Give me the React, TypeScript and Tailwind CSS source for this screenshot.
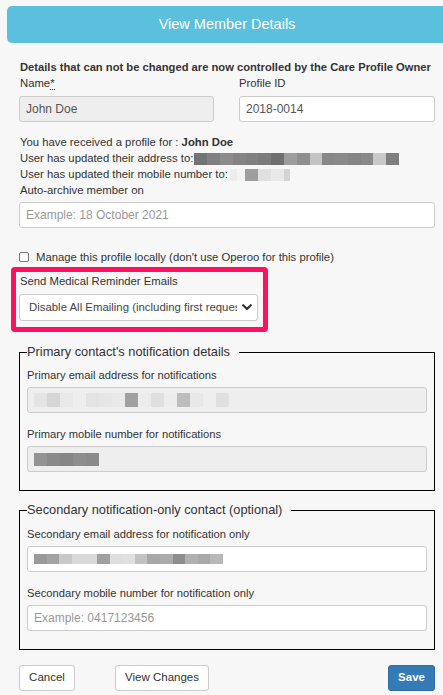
import React from "react";

function Blocks({ colors, w, h, widths }: { colors: string[]; w: number; h: number; widths?: number[] }) {
  return (
    <span className="inline-flex align-middle">
      {colors.map((c, i) => (
        <span key={i} style={{ background: c, width: widths ? widths[i] : w, height: h }} className="inline-block" />
      ))}
    </span>
  );
}

function Chevron() {
  return (
    <svg width="10" height="7" viewBox="0 0 10 7" className="shrink-0">
      <polyline points="1.2,1.2 5,5 8.8,1.2" fill="none" stroke="#333" strokeWidth="2.2" strokeLinecap="round" strokeLinejoin="round" />
    </svg>
  );
}

export default function App() {
  const addr = ["#737373", "#808080", "#8b8b8b", "#848484", "#808080", "#7b7b7b", "#6f6f6f", "#9d9d9d", "#8f8f8f", "#c4c4c4", "#888888", "#8a8a8a", "#858585", "#898989", "#c9c9c9", "#7f7f7f"];
  const mob = ["#ececec", "#f3f3f3", "#9e9e9e", "#e0e0e0", "#e9e9e9", "#d4d4d4"];
  const pEmail = ["#e4e4e4", "#d6d6d6", "#e9e9e9", "#eeeeee", "#e3e3e3", "#e6e6e6", "#e9e9e9", "#a0a0a0", "#ececec", "#e0e0e0", "#ececec", "#bdbdbd", "#e8e8e8", "#eeeeee", "#e0e0e0"];
  const pMob = ["#939393", "#8a8a8a", "#868686", "#8d8d8d", "#8a8a8a"];
  const sEmail = ["#9a9a9a", "#a3a3a3", "#c9c9c9", "#d9d9d9", "#d9d9d9", "#a0a0a0", "#dedede", "#e0e0e0", "#c2c2c2", "#a8a8a8", "#ababab", "#8e8e8e", "#b0b0b0", "#a9a9a9", "#b8b8b8"];

  const inputBase = "h-[26px] border border-[#ccc] rounded-[3px] px-[6px] flex items-center text-[12px]";

  return (
    <div className="w-[443px] min-h-[695px] bg-[#f7f7f7] overflow-hidden font-['Liberation_Sans',Arial,sans-serif] text-[#333]">
      <div className="ml-[7px] mt-[6px] w-[440px] h-[37px] rounded-[5px] bg-[#5bc0de] flex items-center justify-center text-white text-[14.5px]">
        View Member Details
      </div>

      <div className="pl-[19px] pr-[8px]">
        <div className="mt-[16px] leading-[16px] text-[11.2px] font-bold text-[#333] pl-px whitespace-nowrap">
          Details that can not be changed are now controlled by the Care Profile Owner
        </div>

        <div className="grid grid-cols-[195px_196px] gap-x-[25px] text-[11.3px]">
          <div>
            <div className="leading-[16px] pl-px">
              Name<abbr className="no-underline border-b border-dotted border-[#333]">*</abbr>
            </div>
            <div className={inputBase + " mt-[5px] bg-[#eeeeee] text-[#555]"}>John Doe</div>
          </div>
          <div>
            <div className="leading-[16px]">Profile ID</div>
            <div className={inputBase + " mt-[5px] bg-white text-[#555]"}>2018-0014</div>
          </div>
        </div>

        <div className="mt-[12px] text-[11.3px] leading-[16px] pl-px">
          <div>
            You have received a profile for : <span className="font-bold">John Doe</span>
          </div>
          <div className="flex items-center">
            <span>User has updated their address to:</span>
            <span className="ml-[1px]">
              <Blocks colors={addr} w={12.8} h={12} />
            </span>
          </div>
          <div className="flex items-center">
            <span>User has updated their mobile number to:</span>
            <span className="ml-[2px]">
              <Blocks colors={mob} w={13} h={12} widths={[7, 8, 13, 13, 13, 6]} />
            </span>
          </div>
          <div>Auto-archive member on</div>
        </div>

        <div className={inputBase + " mt-[4px] bg-white text-[#999]"}>Example: 18 October 2021</div>

        <label className="mt-[21px] flex items-center leading-[16px] text-[11.3px]">
          <span className="w-[10px] h-[10px] border border-[#767676] rounded-[2px] bg-white shrink-0" />
          <span className="ml-[7px]">Manage this profile locally (don't use Operoo for this profile)</span>
        </label>

        <div className="mt-[2px] -ml-[8px] w-[257px] border-[5px] border-[#ff1060] rounded-[4px] pl-[3px] pr-[5px] pt-px pb-[6px]">
          <div className="leading-[16px] text-[11.3px] pl-px">Send Medical Reminder Emails</div>
          <div className="mt-[5px] h-[27px] border border-[#ccc] rounded-[3px] bg-white flex items-center pl-[9px] pr-[5px]">
            <div className="w-[208px] overflow-hidden whitespace-nowrap text-[11.4px] text-[#444]">
              Disable All Emailing (including first request)
            </div>
            <div className="ml-auto flex items-center">
              <Chevron />
            </div>
          </div>
        </div>

        <fieldset className="mt-[11px] border border-black px-[7px] pb-[18px]">
          <legend className="text-[12.8px] leading-[18px] pr-[9px] text-[#333]">Primary contact's notification details</legend>
          <div className="mt-[6px] leading-[16px] text-[11.2px]">Primary email address for notifications</div>
          <div className={inputBase + " mt-[4px] bg-[#eeeeee] px-[3px]"}>
            <Blocks colors={pEmail} w={13} h={14} />
          </div>
          <div className="mt-[13px] leading-[16px] text-[11.2px]">Primary mobile number for notifications</div>
          <div className={inputBase + " mt-[4px] bg-[#eeeeee] px-[2px]"}>
            <Blocks colors={pMob} w={13} h={13} />
          </div>
        </fieldset>

        <fieldset className="mt-[10px] border border-black px-[7px] pb-[18px]">
          <legend className="text-[12.8px] leading-[18px] pr-[9px] text-[#333]">Secondary notification-only contact (optional)</legend>
          <div className="mt-[7px] leading-[16px] text-[11.2px]">Secondary email address for notification only</div>
          <div className={inputBase + " mt-[4px] bg-white px-[3px]"}>
            <Blocks colors={sEmail} w={12.6} h={10} />
          </div>
          <div className="mt-[13px] leading-[16px] text-[11.2px]">Secondary mobile number for notification only</div>
          <div className={inputBase + " mt-[4px] bg-white text-[#999]"}>Example: 0417123456</div>
        </fieldset>

        <div className="mt-[15px] flex items-center text-[11.5px]">
          <button className="h-[26px] w-[56px] border border-[#ccc] rounded-[3px] bg-white text-[#333]">Cancel</button>
          <button className="ml-[40px] h-[26px] w-[94px] border border-[#ccc] rounded-[3px] bg-white text-[#333]">View Changes</button>
          <button className="ml-auto h-[26px] w-[47px] rounded-[3px] bg-[#337ab7] border border-[#2e6da4] text-white font-bold">Save</button>
        </div>
      </div>
    </div>
  );
}
